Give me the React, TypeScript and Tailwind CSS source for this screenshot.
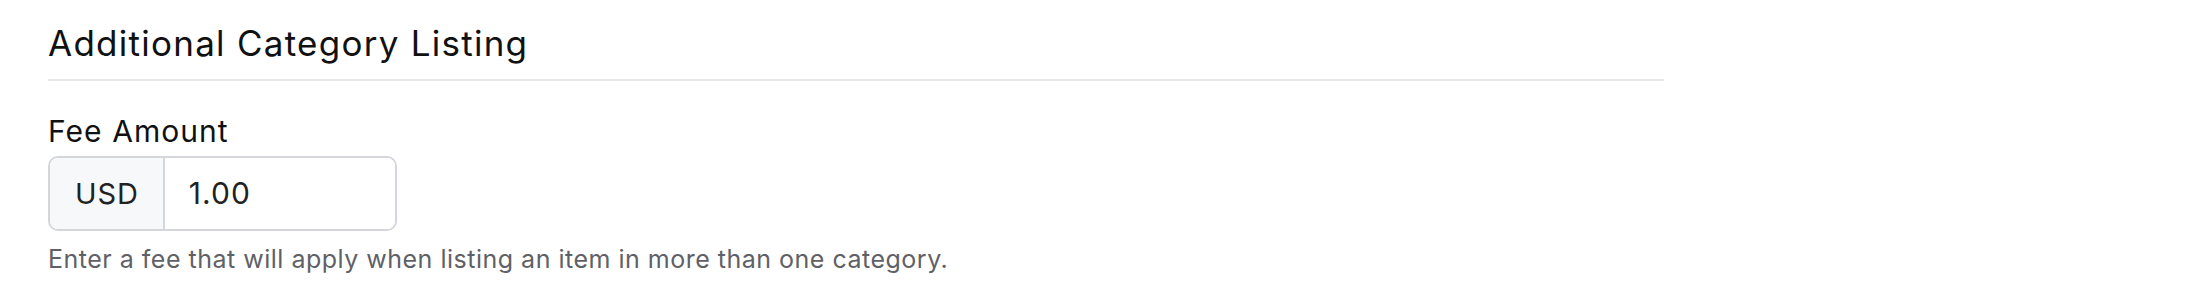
export default function App() {
  return (
    <div className="w-[2200px] h-[284px] bg-white font-['Inter','Liberation_Sans',sans-serif]">
      <div className="w-[1616px] ml-[48px] pt-[21px]">
        <h2 className="text-[35px] leading-[44px] tracking-[0.036em] text-[#111111] font-normal pb-[14px] border-b-2 border-[#e6e6eb]">
          Additional Category Listing
        </h2>
        <div className="mt-[32px]">
          <label className="block text-[30px] leading-[36px] tracking-[0.035em] text-[#111111]">
            Fee Amount
          </label>
          <div className="mt-[7px] flex w-[349px] h-[75px] rounded-[10px] border-2 border-[#d4d6dc] overflow-hidden">
            <span className="flex items-center pl-[25px] pr-[24px] bg-[#f7f8fa] border-r-2 border-[#d4d6dc] text-[29px] tracking-[0.03em] text-[#222222]">
              USD
            </span>
            <input
              className="flex-1 min-w-0 px-[24px] text-[30px] tracking-[0.035em] text-[#222222] outline-none bg-white"
              defaultValue="1.00"
            />
          </div>
          <p className="mt-[12px] text-[25px] leading-[32px] tracking-[0.02em] text-[#5f6166]">
            Enter a fee that will apply when listing an item in more than one category.
          </p>
        </div>
      </div>
    </div>
  );
}
